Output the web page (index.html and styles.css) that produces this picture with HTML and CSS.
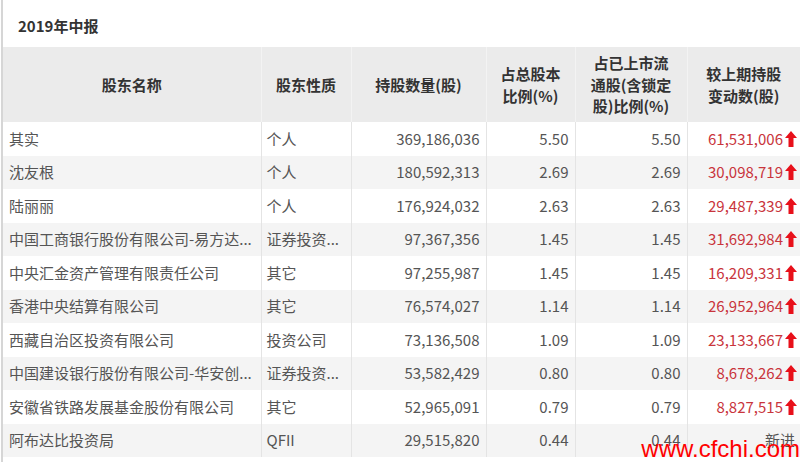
FILE: index.html
```html
<!DOCTYPE html>
<html lang="zh">
<head>
<meta charset="utf-8">
<link rel="stylesheet" href="styles.css">
</head>
<body>
<div class="panel">
  <h2 class="title">2019年中报</h2>
  <table class="holders">
    <colgroup>
      <col class="c1"><col class="c2"><col class="c3"><col class="c4"><col class="c5"><col class="c6">
    </colgroup>
    <thead>
      <tr>
        <th>股东名称</th>
        <th>股东性质</th>
        <th>持股数量(股)</th>
        <th>占总股本<br>比例(%)</th>
        <th>占已上市流<br>通股(含锁定<br>股)比例(%)</th>
        <th>较上期持股<br>变动数(股)</th>
      </tr>
    </thead>
    <tbody>
      <tr><td class="name">其实</td><td class="kind">个人</td><td class="num">369,186,036</td><td class="num">5.50</td><td class="num">5.50</td><td class="chg">61,531,006<svg class="up" viewBox="0 0 12 16"><path d="M6 0 L12 7 L8.5 7 L8.5 16 L3.5 16 L3.5 7 L0 7 Z"/></svg></td></tr>
      <tr><td class="name">沈友根</td><td class="kind">个人</td><td class="num">180,592,313</td><td class="num">2.69</td><td class="num">2.69</td><td class="chg">30,098,719<svg class="up" viewBox="0 0 12 16"><path d="M6 0 L12 7 L8.5 7 L8.5 16 L3.5 16 L3.5 7 L0 7 Z"/></svg></td></tr>
      <tr><td class="name">陆丽丽</td><td class="kind">个人</td><td class="num">176,924,032</td><td class="num">2.63</td><td class="num">2.63</td><td class="chg">29,487,339<svg class="up" viewBox="0 0 12 16"><path d="M6 0 L12 7 L8.5 7 L8.5 16 L3.5 16 L3.5 7 L0 7 Z"/></svg></td></tr>
      <tr><td class="name">中国工商银行股份有限公司-易方达...</td><td class="kind">证券投资...</td><td class="num">97,367,356</td><td class="num">1.45</td><td class="num">1.45</td><td class="chg">31,692,984<svg class="up" viewBox="0 0 12 16"><path d="M6 0 L12 7 L8.5 7 L8.5 16 L3.5 16 L3.5 7 L0 7 Z"/></svg></td></tr>
      <tr><td class="name">中央汇金资产管理有限责任公司</td><td class="kind">其它</td><td class="num">97,255,987</td><td class="num">1.45</td><td class="num">1.45</td><td class="chg">16,209,331<svg class="up" viewBox="0 0 12 16"><path d="M6 0 L12 7 L8.5 7 L8.5 16 L3.5 16 L3.5 7 L0 7 Z"/></svg></td></tr>
      <tr><td class="name">香港中央结算有限公司</td><td class="kind">其它</td><td class="num">76,574,027</td><td class="num">1.14</td><td class="num">1.14</td><td class="chg">26,952,964<svg class="up" viewBox="0 0 12 16"><path d="M6 0 L12 7 L8.5 7 L8.5 16 L3.5 16 L3.5 7 L0 7 Z"/></svg></td></tr>
      <tr><td class="name">西藏自治区投资有限公司</td><td class="kind">投资公司</td><td class="num">73,136,508</td><td class="num">1.09</td><td class="num">1.09</td><td class="chg">23,133,667<svg class="up" viewBox="0 0 12 16"><path d="M6 0 L12 7 L8.5 7 L8.5 16 L3.5 16 L3.5 7 L0 7 Z"/></svg></td></tr>
      <tr><td class="name">中国建设银行股份有限公司-华安创...</td><td class="kind">证券投资...</td><td class="num">53,582,429</td><td class="num">0.80</td><td class="num">0.80</td><td class="chg">8,678,262<svg class="up" viewBox="0 0 12 16"><path d="M6 0 L12 7 L8.5 7 L8.5 16 L3.5 16 L3.5 7 L0 7 Z"/></svg></td></tr>
      <tr><td class="name">安徽省铁路发展基金股份有限公司</td><td class="kind">其它</td><td class="num">52,965,091</td><td class="num">0.79</td><td class="num">0.79</td><td class="chg">8,827,515<svg class="up" viewBox="0 0 12 16"><path d="M6 0 L12 7 L8.5 7 L8.5 16 L3.5 16 L3.5 7 L0 7 Z"/></svg></td></tr>
      <tr><td class="name">阿布达比投资局</td><td class="kind">QFII</td><td class="num">29,515,820</td><td class="num">0.44</td><td class="num">0.44</td><td class="new">新进</td></tr>
    </tbody>
  </table>
  <div class="watermark">www.cfchi.com</div>
</div>
</body>
</html>
```

FILE: styles.css
```css
html, body {
  margin: 0;
  padding: 0;
  background: #fff;
}
body {
  width: 800px;
  height: 462px;
  overflow: hidden;
  font-family: "Microsoft YaHei", "Noto Sans CJK SC", "Noto Sans", sans-serif;
  color: #555;
}
.panel {
  position: relative;
  margin-left: 1px;
  border-left: 2px solid #d6d6d6;
  height: 462px;
}
.title {
  margin: 0;
  height: 47px;
  line-height: 52px;
  padding-left: 15px;
  font-size: 15px;
  font-weight: bold;
  color: #333;
}
.holders {
  border-collapse: collapse;
  table-layout: fixed;
  width: 797px;
  font-size: 15px;
}
.c1 { width: 258px; }
.c2 { width: 90px; }
.c3 { width: 135px; }
.c4 { width: 89px; }
.c5 { width: 112px; }
.c6 { width: 113px; }
.holders th {
  background: #ebebeb;
  height: 75px;
  padding: 0;
  font-weight: bold;
  color: #333;
  line-height: 21.5px;
  text-align: center;
  border-left: 1px solid #f3f3f3;
}
.holders th:first-child { border-left: none; }
.holders td {
  height: 33.5px;
  padding: 0 6px;
  border-left: 1px solid #e4e4e4;
  white-space: nowrap;
  overflow: hidden;
  line-height: 20px;
}
.holders td:first-child { border-left: none; }
.holders tbody tr:nth-child(even) td { background: #f4f4f4; }
.holders td.name { padding-left: 6px; }
.holders td.kind { padding-left: 5px; }
.holders td.num { text-align: right; }
.holders td.chg {
  color: #c9353c;
  padding: 0 3px 0 0;
  text-align: right;
}
.holders td.new {
  padding: 0 5px 0 0;
  text-align: right;
}
.up {
  width: 12px;
  height: 16px;
  fill: #e8101a;
  margin-left: 2px;
  vertical-align: -2px;
}
.watermark {
  position: absolute;
  right: 0;
  bottom: 1px;
  font-family: "Liberation Sans", Arial, sans-serif;
  font-size: 24px;
  line-height: 24px;
  color: #f00;
}
```
